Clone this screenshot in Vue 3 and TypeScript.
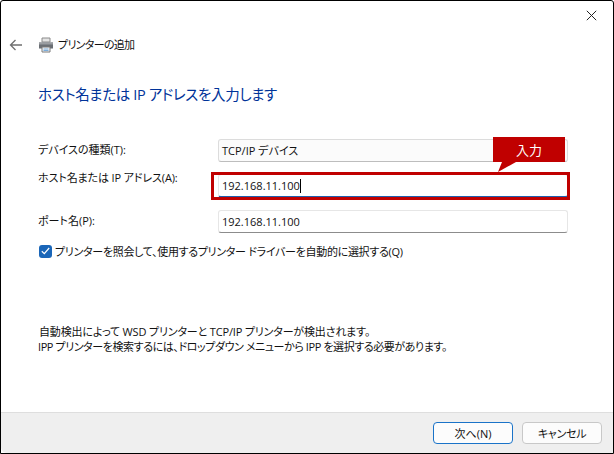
<script setup lang="ts">
const rows: { label: string; value: string; key: string }[] = [
  { key: 'type', label: 'デバイスの種類(T):', value: 'TCP/IP デバイス' },
  { key: 'host', label: 'ホスト名または IP アドレス(A):', value: '192.168.11.100' },
  { key: 'port', label: 'ポート名(P):', value: '192.168.11.100' }
]
</script>

<template>
  <div class="window">
    <div class="corner-close">
      <svg width="11" height="11" viewBox="0 0 11 11"><path d="M.8.8l9.4 9.4M10.2.8L.8 10.2" stroke="#222" stroke-width="1" fill="none" /></svg>
    </div>
    <main class="body">
      <header class="nav">
        <svg class="back" width="14" height="12" viewBox="0 0 14 12"><path d="M13 6H1.5M6.500 1L1.500 6l5 5" stroke="#6f6f6f" stroke-width="1.3" fill="none" /></svg>
        <svg class="printer" width="16" height="16" viewBox="0 0 16 16">
          <path d="M4 1h8v4H4z" fill="#e4e4e4" stroke="#8a8a8a" />
          <path d="M1 5.500h14v6H1z" fill="#6b6f74" />
          <path d="M1 5.500h14v2H1z" fill="#9a9da1" />
          <path d="M4 10h8v5H4z" fill="#f4f4f4" stroke="#7a7a7a" />
          <path d="M5.500 12h5M5.500 13.500h5" stroke="#5b9bd5" stroke-width=".8" />
        </svg>
        <span class="nav-title">プリンターの追加</span>
      </header>
      <h1 class="heading">ホスト名または IP アドレスを入力します</h1>
      <section class="form">
        <div v-for="r in rows" :key="r.key" class="row" :class="'row-' + r.key">
          <label class="label">{{ r.label }}</label>
          <div class="field" :class="'field-' + r.key">
            <span class="value">{{ r.value }}</span><i v-if="r.key === 'host'" class="caret"></i>
            <div v-if="r.key === 'host'" class="highlight"></div>
            <div v-if="r.key === 'host'" class="callout">
              <span>入力</span>
              <svg class="tail" width="26" height="11" viewBox="0 0 26 11"><path d="M5 0L1 10 19 0z" fill="#c00000" /></svg>
            </div>
          </div>
        </div>
      </section>
      <div class="check-row">
        <span class="check">
          <svg width="9" height="8" viewBox="0 0 9 8"><path d="M.8 4.200l2.500 2.400L8.200 1" stroke="#fff" stroke-width="1.200" fill="none" /></svg>
        </span>
        <span class="check-label">プリンターを照会して、使用するプリンター ドライバーを自動的に選択する(Q)</span>
      </div>
      <p class="note">
        <span class="note-a">自動検出によって WSD プリンターと TCP/IP プリンターが検出されます。</span>
        <span class="note-b">IPP プリンターを検索するには、ドロップダウン メニューから IPP を選択する必要があります。</span>
      </p>
    </main>
    <footer class="footer">
      <button class="btn primary">次へ(N)</button>
      <button class="btn cancel">キャンセル</button>
    </footer>
  </div>
</template>

<style>
html, body { margin: 0; background: #fff; }
</style>

<style scoped>
.window {
  box-sizing: border-box;
  width: 614px;
  height: 454px;
  border: 1px solid #000;
  border-radius: 3px 3px 0 0;
  background: #fff;
  display: flex;
  flex-direction: column;
  position: relative;
  overflow: hidden;
  font-family: "Open Sans", "Noto Sans CJK JP", sans-serif;
  font-feature-settings: "palt";
  font-size: 11px;
  color: #111;
}
.corner-close { position: absolute; right: 16px; top: 9px; line-height: 0; }
.body { flex: 1; padding: 0 0 0 37px; min-height: 0; }
.nav { display: flex; align-items: center; height: 16px; margin: 36px 0 0 -29px; }
.back { margin-right: 15px; }
.printer { margin-right: 4px; }
.nav-title { line-height: 16px; letter-spacing: -.7px; }
.heading {
  margin: 32px 0 0;
  font-size: 14.5px;
  line-height: 20px;
  font-weight: 400;
  letter-spacing: -.37px;
  color: #003399;
}
.form { margin-top: 34px; width: 530px; }
.row { display: flex; justify-content: space-between; }
.row-type { height: 23px; }
.row-host { height: 24px; margin-top: 12px; }
.row-port { height: 23px; margin-top: 12px; }
.label { line-height: 20px; padding-top: 1px; }
.row-host .label { margin-top: -7px; letter-spacing: -.12px; }
.field {
  box-sizing: border-box;
  width: 350px;
  padding: 0 0 1px 3px;
  border: 1px solid #e6e6e6;
  border-bottom-color: #8c8c8c;
  border-radius: 3px;
  background: #fff;
  display: flex;
  align-items: center;
  position: relative;
}
.field-type { background: #fbfbfb; border-color: #dcdcdc #dcdcdc #bdbdbd; }
.field-host { border-bottom: 2px solid #1f5fae; padding-bottom: 0; }
.caret { width: 1px; height: 14px; background: #000; }
.highlight {
  position: absolute;
  left: -8px;
  right: -3px;
  top: -3px;
  bottom: -4px;
  border: 3px solid #c00000;
  box-sizing: border-box;
}
.callout {
  position: absolute;
  left: 274px;
  top: -38px;
  width: 72px;
  height: 25px;
  background: #c00000;
  color: #fff;
  font-size: 13px;
  display: flex;
  align-items: center;
  justify-content: center;
}
.tail { position: absolute; left: 4px; top: 25px; }
.check-row { display: flex; align-items: center; margin-top: 11px; height: 14px; margin-left: 1px; }
.check {
  box-sizing: border-box;
  width: 13px;
  height: 13px;
  border-radius: 3px;
  background: #1a66b8;
  display: flex;
  align-items: center;
  justify-content: center;
  margin-right: 3px;
}
.check-label { letter-spacing: -.3px; }
.note { margin: 66px 0 0; line-height: 15px; display: flex; flex-direction: column; }
.note-a { padding-left: 1px; letter-spacing: -.16px; }
.note-b { letter-spacing: -.42px; }
.footer {
  box-sizing: border-box;
  height: 41px;
  border-top: 1px solid #dedede;
  border-radius: 0 0 0 6px;
  background: #efefef;
  display: flex;
  justify-content: flex-end;
  align-items: flex-start;
  gap: 9px;
  padding: 9px 11px 0 0;
}
.btn {
  box-sizing: border-box;
  width: 80px;
  height: 22px;
  padding: 0;
  border: 1px solid #c8c8c8;
  border-radius: 4px;
  background: #fcfcfc;
  font: inherit;
  color: #111;
}
.cancel { letter-spacing: -.3px; }
.primary { border: 1.5px solid #1a73c8; }
</style>
